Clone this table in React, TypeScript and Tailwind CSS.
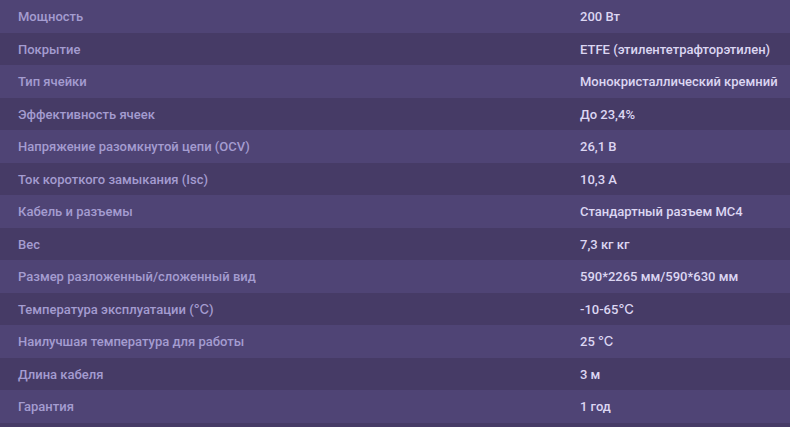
const specs: [string, string][] = [
  ["Мощность", "200 Вт"],
  ["Покрытие", "ETFE (этилентетрафторэтилен)"],
  ["Тип ячейки", "Монокристаллический кремний"],
  ["Эффективность ячеек", "До 23,4%"],
  ["Напряжение разомкнутой цепи (OCV)", "26,1 В"],
  ["Ток короткого замыкания (Isc)", "10,3 А"],
  ["Кабель и разъемы", "Стандартный разъем MC4"],
  ["Вес", "7,3 кг кг"],
  ["Размер разложенный/сложенный вид", "590*2265 мм/590*630 мм"],
  ["Температура эксплуатации (℃)", "-10-65℃"],
  ["Наилучшая температура для работы", "25 ℃"],
  ["Длина кабеля", "3 м"],
  ["Гарантия", "1 год"],
];

export default function App() {
  return (
    <div className="w-[790px] h-[427px] bg-[#463b66] overflow-hidden font-['Roboto','Inter',sans-serif] text-[13px] font-medium">
      {specs.map(([label, value], i) => (
        <div
          key={i}
          className={
            "grid grid-cols-[580px_1fr] h-[32.5px] items-center pt-px " +
            (i % 2 === 0 ? "bg-[#4f4475]" : "bg-[#463b66]")
          }
        >
          <div className="pl-[18px] text-[#a49cd0] whitespace-nowrap">{label}</div>
          <div className="text-[#dcd6f2] whitespace-nowrap">{value}</div>
        </div>
      ))}
    </div>
  );
}
